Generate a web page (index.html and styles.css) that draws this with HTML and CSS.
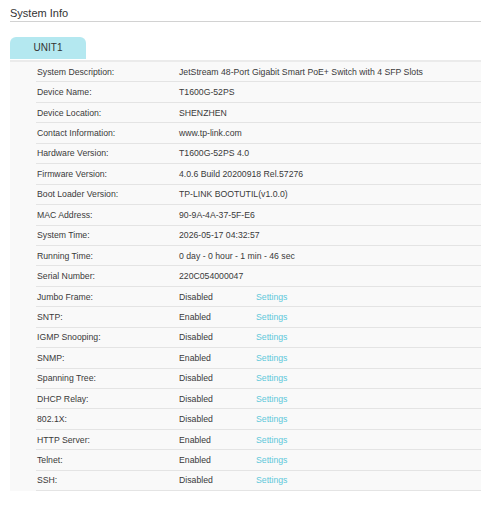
FILE: index.html
```html
<!DOCTYPE html>
<html>
<head>
<meta charset="utf-8">
<link rel="stylesheet" href="styles.css">
</head>
<body>
<div class="page">
  <div class="title">System Info</div>
  <div class="tabs"><div class="tab">UNIT1</div></div>
  <div class="panel">
    <div class="row"><div class="label">System Description:</div><div class="value wide">JetStream 48-Port Gigabit Smart PoE+ Switch with 4 SFP Slots</div></div>
    <div class="row"><div class="label">Device Name:</div><div class="value wide">T1600G-52PS</div></div>
    <div class="row"><div class="label">Device Location:</div><div class="value wide">SHENZHEN</div></div>
    <div class="row"><div class="label">Contact Information:</div><div class="value wide">www.tp-link.com</div></div>
    <div class="row"><div class="label">Hardware Version:</div><div class="value wide">T1600G-52PS 4.0</div></div>
    <div class="row"><div class="label">Firmware Version:</div><div class="value wide">4.0.6 Build 20200918 Rel.57276</div></div>
    <div class="row"><div class="label">Boot Loader Version:</div><div class="value wide">TP-LINK BOOTUTIL(v1.0.0)</div></div>
    <div class="row"><div class="label">MAC Address:</div><div class="value wide">90-9A-4A-37-5F-E6</div></div>
    <div class="row"><div class="label">System Time:</div><div class="value wide">2026-05-17 04:32:57</div></div>
    <div class="row"><div class="label">Running Time:</div><div class="value wide">0 day - 0 hour - 1 min - 46 sec</div></div>
    <div class="row"><div class="label">Serial Number:</div><div class="value wide">220C054000047</div></div>
    <div class="row"><div class="label">Jumbo Frame:</div><div class="value">Disabled</div><a class="link">Settings</a></div>
    <div class="row"><div class="label">SNTP:</div><div class="value">Enabled</div><a class="link">Settings</a></div>
    <div class="row"><div class="label">IGMP Snooping:</div><div class="value">Disabled</div><a class="link">Settings</a></div>
    <div class="row"><div class="label">SNMP:</div><div class="value">Enabled</div><a class="link">Settings</a></div>
    <div class="row"><div class="label">Spanning Tree:</div><div class="value">Disabled</div><a class="link">Settings</a></div>
    <div class="row"><div class="label">DHCP Relay:</div><div class="value">Disabled</div><a class="link">Settings</a></div>
    <div class="row"><div class="label">802.1X:</div><div class="value">Disabled</div><a class="link">Settings</a></div>
    <div class="row"><div class="label">HTTP Server:</div><div class="value">Enabled</div><a class="link">Settings</a></div>
    <div class="row"><div class="label">Telnet:</div><div class="value">Enabled</div><a class="link">Settings</a></div>
    <div class="row"><div class="label">SSH:</div><div class="value">Disabled</div><a class="link">Settings</a></div>
  </div>
</div>
</body>
</html>
```
FILE: styles.css
```css
html, body {
  margin: 0;
  padding: 0;
  background: #fff;
}
body {
  font-family: "Liberation Sans", Arial, sans-serif;
  color: #3a3a3a;
}
.page {
  padding-left: 10px;
}
.title {
  font-size: 11px;
  color: #333;
  padding-top: 6px;
  height: 15px;
  line-height: 15px;
  border-bottom: 1.5px solid #d2d2d2;
}
.tabs {
  display: flex;
  margin-top: 15px;
}
.tab {
  width: 76px;
  height: 22px;
  line-height: 22px;
  background: #b4e8f0;
  border-radius: 6px 6px 0 0;
  font-size: 10px;
  color: #333;
  text-align: center;
}
.panel {
  margin-top: 1px;
  background: #f9f9f9;
  border-top: 2px solid #ebebeb;
  padding-left: 26px;
}
.row {
  display: flex;
  align-items: center;
  height: 19.45px;
  border-bottom: 1px solid #e4e4e4;
  font-size: 8.7px;
}
.label {
  width: 143px;
  padding-left: 1px;
  box-sizing: border-box;
  flex: none;
}
.value {
  width: 77px;
  flex: none;
}
.value.wide {
  width: auto;
}
.link {
  color: #5ec8da;
  cursor: pointer;
}
```
